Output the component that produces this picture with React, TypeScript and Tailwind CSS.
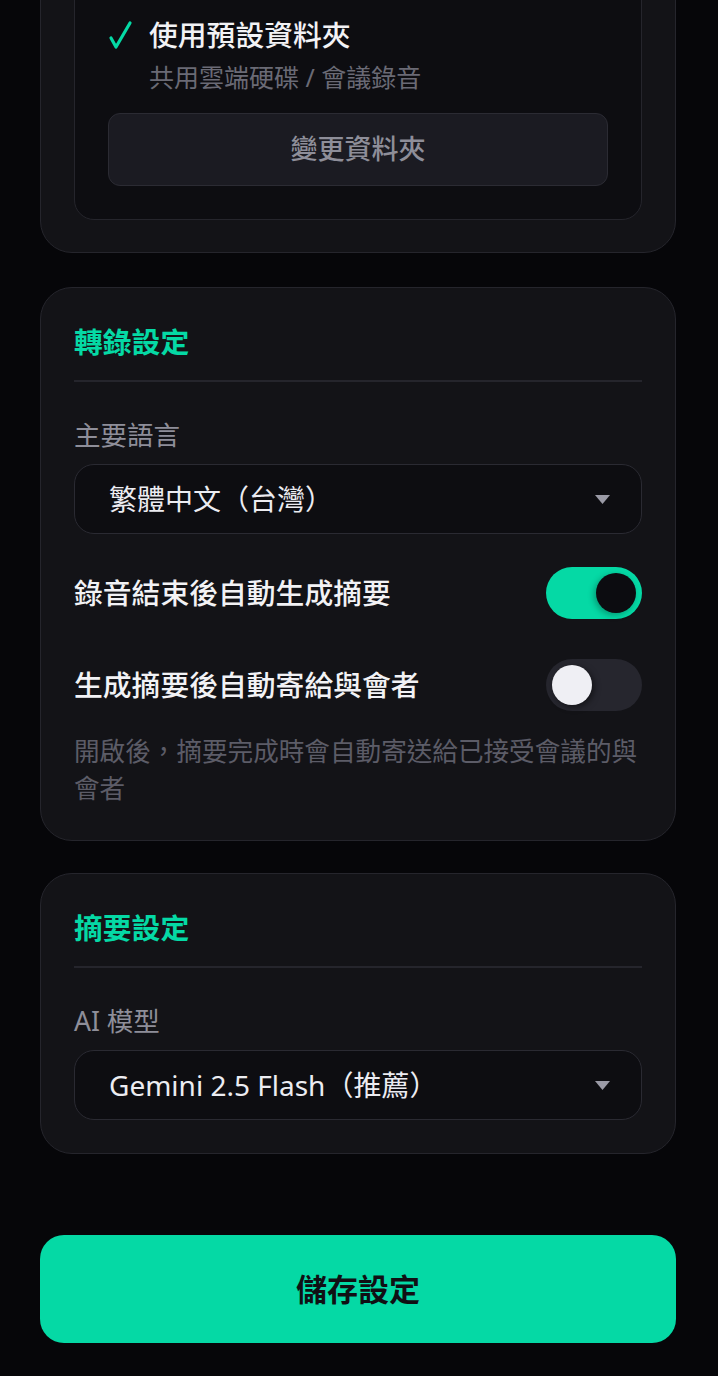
import React from "react";

const font = { fontFamily: '"Noto Sans", "Noto Sans CJK TC", sans-serif' };

function Toggle({ on }: { on: boolean }) {
  return (
    <div
      className={`relative flex h-[52px] w-[96px] shrink-0 items-center rounded-full px-[6px] ${
        on ? "justify-end bg-[#05d9a5]" : "justify-start bg-[#26262e]"
      }`}
    >
      <div
        className={`h-[40px] w-[40px] rounded-full ${
          on ? "bg-[#0c0c10] shadow-[-2px_2px_6px_rgba(0,0,0,0.3)]" : "bg-[#efeff4] shadow-[2px_2px_6px_rgba(0,0,0,0.5)]"
        }`}
      />
    </div>
  );
}

function Select({ value }: { value: string }) {
  return (
    <div className="flex h-[70px] items-center justify-between rounded-[20px] border border-[#2a2a32] bg-[#0d0d11] pl-[34px] pr-[31px]">
      <span className="text-[28px] leading-[36px] text-[#ececf1]">{value}</span>
      <svg width="15" height="9" viewBox="0 0 15 9">
        <path d="M0 0 L15 0 L7.5 9 Z" fill="#9a9aa6" />
      </svg>
    </div>
  );
}

function Card({ title, children }: { title: string; children: React.ReactNode }) {
  return (
    <div className="rounded-[32px] border border-[#25252c] bg-[#131317] px-[33px] pb-[33px] pt-[33px]">
      <div className="text-[28.8px] font-bold leading-[42px] text-[#05d9a5]">{title}</div>
      <div className="mt-[17px] h-[2px] bg-[#25252c]" />
      {children}
    </div>
  );
}

export default function App() {
  return (
    <div className="min-h-[1376px] overflow-hidden bg-[#060609] pb-[34px] pl-[40px] pr-[42px]" style={font}>
      {/* Folder card (partially scrolled) */}
      <div className="mt-[-56px] rounded-[32px] border border-[#25252c] bg-[#131317] px-[33px] pb-[32px] pt-[34px]">
        <div className="rounded-[20px] border border-[#25252c] bg-[#0d0d11] px-[33px] pb-[33px] pt-[34px]">
          <div className="flex items-center">
            <svg width="41" height="42" viewBox="0 0 41 42" className="shrink-0">
              <path d="M3 24 L8 33 L22 9" fill="none" stroke="#05d9a5" strokeWidth="3.2" strokeLinecap="round" strokeLinejoin="round" />
            </svg>
            <span className="text-[28.8px] font-medium leading-[42px] text-[#f2f2f5]">使用預設資料夾</span>
          </div>
          <div className="mt-[6px] pl-[41px] text-[25px] leading-[30px] text-[#6a6a75]">共用雲端硬碟 / 會議錄音</div>
          <div className="mt-[21px] flex h-[73px] items-center justify-center rounded-[12px] border border-[#2b2b33] bg-[#1b1b22] text-[27px] font-medium text-[#8e8e99]">
            變更資料夾
          </div>
        </div>
      </div>

      <div className="mt-[34px]">
        <Card title="轉錄設定">
          <div className="mt-[37px] text-[26.5px] leading-[32px] text-[#8e8e99]">主要語言</div>
          <div className="mt-[13px]">
            <Select value="繁體中文（台灣）" />
          </div>
          <div className="mt-[33px] flex items-center justify-between">
            <span className="text-[28.8px] font-medium leading-[36px] text-[#f2f2f5]">錄音結束後自動生成摘要</span>
            <Toggle on />
          </div>
          <div className="mt-[40px] flex items-center justify-between">
            <span className="text-[28.8px] font-medium leading-[36px] text-[#f2f2f5]">生成摘要後自動寄給與會者</span>
            <Toggle on={false} />
          </div>
          <div className="mt-[22px] text-[25.6px] leading-[37px] text-[#5c5c67]">
            開啟後，摘要完成時會自動寄送給已接受會議的與會者
          </div>
        </Card>
      </div>

      <div className="mt-[32px]">
        <Card title="摘要設定">
          <div className="mt-[37px] text-[26.5px] leading-[32px] text-[#8e8e99]">AI 模型</div>
          <div className="mt-[13px]">
            <Select value="Gemini 2.5 Flash（推薦）" />
          </div>
        </Card>
      </div>

      <div className="mt-[81px] flex h-[108px] items-center justify-center rounded-[24px] bg-[#05d9a5] text-[31px] font-bold text-[#101014]">
        儲存設定
      </div>
    </div>
  );
}
